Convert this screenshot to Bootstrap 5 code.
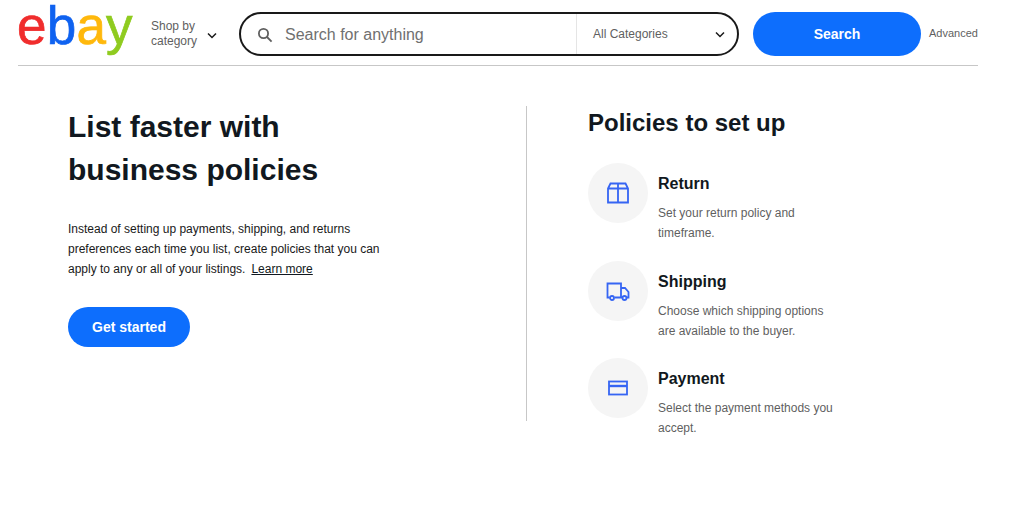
<!DOCTYPE html>
<html lang="en">
<head>
<meta charset="utf-8">
<title>eBay business policies</title>
<link href="https://cdn.jsdelivr.net/npm/bootstrap@5.3.0/dist/css/bootstrap.min.css" rel="stylesheet">
<style>
html,body{height:511px;overflow:hidden;background:#fff}
body{font-family:"Liberation Sans",Arial,sans-serif;color:#111820}
.hdr{margin:0 38px 0 18px;height:66px;border-bottom:1px solid #c7c7c7}
.logo-word{font-size:53px;line-height:46px;letter-spacing:.2px;width:134px;height:46px;margin:3px 0 0 -1px;white-space:nowrap;font-family:"Liberation Sans",sans-serif;-webkit-text-stroke:.7px currentColor}
.lb{color:#0f62f0}.lr{color:#f02d2d}.ly{color:#ffb80c}.lg{color:#8fcb1f}
.shop{font-size:12px;line-height:15px;color:#5f5f5f;width:56px;margin-top:3px}
.chev1{margin-top:5px}
.shop-wrap{width:88px}
.sbar{width:500px;height:44px;border:2px solid #191919;border-radius:22px;margin-top:12px}
.sinput{flex:1;padding:1px 0 0 16px;font-size:16px;color:#707070;gap:12px}
.scat{width:161px;height:100%;border-left:1px solid #e5e5e5;padding:0 12px 0 16px;font-size:12px;color:#5f5f5f}
.sbtn{width:168px;height:44px;margin:12px 0 0 14px;border-radius:22px;background:#0d6efd;color:#fff;font-size:14px;font-weight:700;border:0}
.adv{font-size:11px;color:#5f5f5f;margin:25px 0 0 8px}
.main-area{margin-top:40px}
.lcol{width:459px;height:315px;margin-left:68px;border-right:1px solid #c7c7c7}
.ttl{font-size:30px;line-height:43px;font-weight:700;margin:-1px 0 0;color:#111820}
.intro{font-size:12px;line-height:20px;margin:28px 0 0;color:#191919;width:330px}
.intro a{color:#111820;margin-left:6px}
.gs{display:inline-block;margin-top:28px;width:122px;height:40px;line-height:40px;padding:0;border:0;border-radius:20px;background:#0d6efd;color:#fff;font-size:14px;font-weight:700}
.rcol{padding-left:61px;width:420px}
.pol{font-size:24px;line-height:32px;font-weight:700;margin:1px 0 24px;color:#111820}
.pitem{height:97.5px;gap:10px}
.circ{width:60px;height:60px;border-radius:50%;background:#f5f5f5;flex:none}
.ph{font-size:16px;line-height:20px;font-weight:700;margin:11px 0 9px;color:#111820}
.pd{font-size:12px;line-height:20px;color:#5f5f5f;margin:0;width:185px}
</style>
</head>
<body>
<header class="hdr d-flex">
  <div class="logo-word"><span class="lr">e</span><span class="lb">b</span><span class="ly">a</span><span class="lg">y</span></div>
  <div class="shop-wrap d-flex align-items-center">
    <div class="shop">Shop by category</div>
    <svg class="chev1" width="10" height="7" viewBox="0 0 10 7" fill="none" stroke="#191919" stroke-width="1.5"><path d="M1 1.5l4 4 4-4"/></svg>
  </div>
  <div class="sbar d-flex align-items-center">
    <div class="sinput d-flex align-items-center">
      <svg width="16" height="16" viewBox="0 0 16 16" fill="none" stroke="#5f5f5f" stroke-width="1.8"><circle cx="6.5" cy="6.5" r="4.6"/><path d="M10 10l4.6 4.6"/></svg>
      <span>Search for anything</span>
    </div>
    <div class="scat d-flex align-items-center justify-content-between">
      <span>All Categories</span>
      <svg width="10" height="7" viewBox="0 0 10 7" fill="none" stroke="#191919" stroke-width="1.5"><path d="M1 1.5l4 4 4-4"/></svg>
    </div>
  </div>
  <button class="sbtn btn">Search</button>
  <div class="adv">Advanced</div>
</header>
<main class="main-area d-flex">
  <section class="lcol">
    <h1 class="ttl">List faster with<br>business policies</h1>
    <p class="intro">Instead of setting up payments, shipping, and returns preferences each time you list, create policies that you can apply to any or all of your listings.<a href="#">Learn more</a></p>
    <a href="#" class="gs btn">Get started</a>
  </section>
  <section class="rcol">
    <h2 class="pol">Policies to set up</h2>
    <div class="pitem d-flex">
      <div class="circ d-flex align-items-center justify-content-center">
        <svg width="24" height="24" viewBox="0 0 24 24" fill="none" stroke="#3665f3" stroke-width="1.8"><path d="M2 7.500V21.500h20V7.500L19.500 2.500h-15zM2 7.500h20M12 2.500v19"/></svg>
      </div>
      <div><div class="ph">Return</div><p class="pd">Set your return policy and timeframe.</p></div>
    </div>
    <div class="pitem d-flex">
      <div class="circ d-flex align-items-center justify-content-center">
        <svg width="24" height="24" viewBox="0 0 24 24" fill="none" stroke="#3665f3" stroke-width="1.8"><path d="M3.500 18.500H1.500V4.500h13.500v14H8.500M15 9h4l3.500 4v5.500h-1.500M15 18.500h1.500"/><circle cx="6" cy="19" r="2"/><circle cx="18.500" cy="19" r="2"/></svg>
      </div>
      <div><div class="ph">Shipping</div><p class="pd">Choose which shipping options are available to the buyer.</p></div>
    </div>
    <div class="pitem d-flex">
      <div class="circ d-flex align-items-center justify-content-center">
        <svg width="24" height="24" viewBox="0 0 24 24" fill="none" stroke="#3665f3" stroke-width="1.8"><rect x="3" y="5.500" width="18" height="13"/><path d="M3 10h18" stroke-width="2.400"/></svg>
      </div>
      <div><div class="ph">Payment</div><p class="pd">Select the payment methods you accept.</p></div>
    </div>
  </section>
</main>
<script src="https://cdn.jsdelivr.net/npm/bootstrap@5.3.0/dist/js/bootstrap.bundle.min.js"></script>
</body>
</html>
